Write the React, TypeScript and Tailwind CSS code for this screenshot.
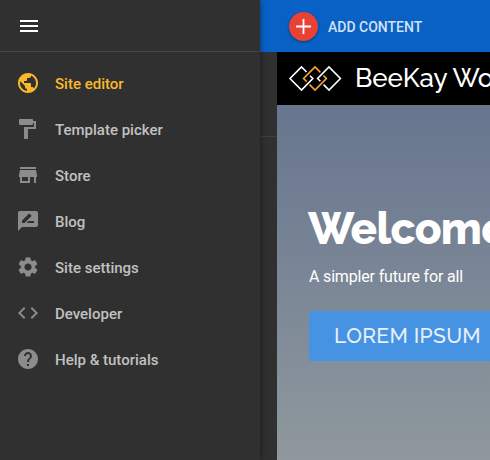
import { MdPublic, MdFormatPaint, MdRateReview, MdSettings, MdCode, MdHelp, MdMenu } from "react-icons/md";
import type { ReactNode } from "react";

function StoreIcon() {
  return (
    <svg width="24" height="24" viewBox="0 0 24 24" fill="currentColor">
      <path d="M20 4H4v2h16V4zm1 10v-2l-1-5H4l-1 5v2h1v6h10v-6h4v6h2v-6h1zm-9 4H6v-4h6v4z" />
    </svg>
  );
}

const items: { label: string; icon: ReactNode; active?: boolean }[] = [
  { label: "Site editor", icon: <MdPublic size={24} />, active: true },
  { label: "Template picker", icon: <MdFormatPaint size={24} className="-ml-px mr-px" /> },
  { label: "Store", icon: <StoreIcon /> },
  { label: "Blog", icon: <MdRateReview size={24} /> },
  { label: "Site settings", icon: <MdSettings size={24} /> },
  { label: "Developer", icon: <MdCode size={24} /> },
  { label: "Help & tutorials", icon: <MdHelp size={24} /> },
];

function Sidebar() {
  return (
    <aside className="relative z-10 w-[260px] shrink-0 bg-[#303030] shadow-[0_0_6px_rgba(0,0,0,0.5)]">
      <div className="flex h-[52px] items-start border-b border-[#444] pt-[14px] pl-[17px] text-white">
        <MdMenu size={24} />
      </div>
      <nav className="flex flex-col pt-[9px]">
        {items.map((item) => (
          <a key={item.label} className="flex h-[46px] items-center pl-4">
            <span className={item.active ? "pb-0.5 text-[#fbb829]" : "pb-0.5 text-[#8c8c8c]"}>{item.icon}</span>
            <span
              className={
                item.active
                  ? "ml-[15px] text-[15px] font-medium text-[#fbb829]"
                  : "ml-[15px] text-[15px] font-medium text-[#c1c1c1]"
              }
            >
              {item.label}
            </span>
          </a>
        ))}
      </nav>
    </aside>
  );
}

function Logo() {
  return (
    <svg className="mt-3 shrink-0 self-start" width="54" height="28" viewBox="288 64 54 28" fill="none" strokeWidth="1.6">
      <path stroke="#fff" d="M306.6 72L301.5 67L290 78.5L301.5 90L312.8 78.5L310 75.7" />
      <path stroke="#f9a732" d="M306.8 81.7L303.6 78.5L315 67L320.4 72.4M323.4 75.5L326.4 78.5L315 90L309.6 84.6" />
      <path stroke="#fff" d="M320.4 81.3L317.6 78.5L329 67L340.4 78.5L329 90L323.6 84.6" />
    </svg>
  );
}

export default function App() {
  return (
    <div className="flex h-[460px] w-[490px] overflow-hidden bg-[#303030] font-[Roboto,sans-serif]">
      <Sidebar />
      <main className="flex min-w-0 flex-1 flex-col">
        <header className="flex h-[52px] shrink-0 items-center bg-[#0961c5] pl-[29px]">
          <span className="flex size-[29px] items-center justify-center rounded-full bg-[#e94235] shadow-[0_1px_3px_rgba(0,0,0,0.4)]">
            <svg width="15" height="15" viewBox="0 0 15 15" fill="none" stroke="#fff" strokeWidth="1.8">
              <path d="M7.5 0v15M0 7.5h15" />
            </svg>
          </span>
          <span className="mt-0.5 ml-[10px] whitespace-nowrap text-[14px] font-medium text-[#d2e2f5]">ADD CONTENT</span>
        </header>
        <div className="flex min-h-0 flex-1">
          <div className="w-[17px] shrink-0">
            <div className="h-[85px] border-b border-[#3e3e3e]" />
          </div>
          <section className="flex min-w-0 flex-1 flex-col">
            <div className="flex h-[53px] shrink-0 items-center bg-black pl-[11px]">
              <Logo />
              <span className="mb-px ml-[13px] whitespace-nowrap font-[Raleway,Lato,sans-serif] text-[26px] font-medium tracking-[-0.1px] text-white">
                BeeKay World
              </span>
            </div>
            <div className="flex min-h-0 flex-1 flex-col items-start bg-linear-to-b from-[#67758f] via-[#7b8796] to-[#8f989d] pl-8 text-white">
              <h1 className="mt-[98px] -ml-px whitespace-nowrap font-[Raleway,Lato,sans-serif] text-[44px] leading-[52px] font-extrabold tracking-[-0.7px]">
                Welcome
              </h1>
              <p className="mt-[12px] whitespace-nowrap text-[16px] leading-5 tracking-[-0.17px]">A simpler future for all</p>
              <button className="mt-[24px] h-[50px] w-[200px] shrink-0 bg-[#4693e4] pl-[25px] text-left font-[Raleway,Lato,sans-serif] text-[21px] font-medium tracking-[0.35px] whitespace-nowrap text-[#e8f0f8]">
                LOREM IPSUM
              </button>
            </div>
          </section>
        </div>
      </main>
    </div>
  );
}
